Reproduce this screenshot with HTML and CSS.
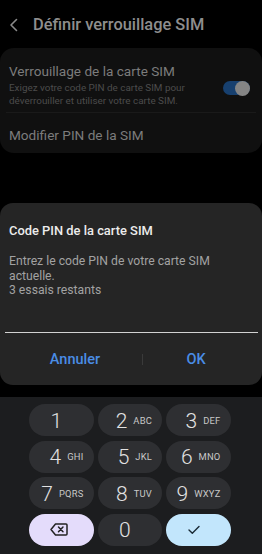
FILE: index.html
```html
<!DOCTYPE html>
<html lang="fr">
<head>
<meta charset="utf-8">
<link rel="stylesheet" href="styles.css">
</head>
<body>
<div class="screen">
  <div class="header">
    <svg class="back" width="10" height="14" viewBox="0 0 10 14"><path d="M7.5 1.5 L2 7 L7.5 12.5" fill="none" stroke="#8a8a8a" stroke-width="1.6" stroke-linecap="round" stroke-linejoin="round"/></svg>
    <span class="title">Définir verrouillage SIM</span>
  </div>
  <div class="card">
    <div class="item item-toggle">
      <div class="item-text">
        <div class="item-title">Verrouillage de la carte SIM</div>
        <div class="item-sub">Exigez votre code PIN de carte SIM pour déverrouiller et utiliser votre carte SIM.</div>
      </div>
      <div class="toggle"><div class="knob"></div></div>
    </div>
    <div class="divider"></div>
    <div class="item item-plain">
      <div class="item-title">Modifier PIN de la SIM</div>
    </div>
  </div>
  <div class="dialog">
    <div class="dlg-title">Code PIN de la carte SIM</div>
    <div class="dlg-body">Entrez le code PIN de votre carte SIM actuelle.<br>3 essais restants</div>
    <div class="dlg-input"></div>
    <div class="dlg-buttons">
      <div class="btn btn-cancel">Annuler</div>
      <div class="btn-sep"></div>
      <div class="btn btn-ok">OK</div>
    </div>
  </div>
  <div class="keypad">
    <div class="key"><span class="d">1</span></div>
    <div class="key"><span class="d">2</span><span class="l">ABC</span></div>
    <div class="key"><span class="d">3</span><span class="l">DEF</span></div>
    <div class="key"><span class="d">4</span><span class="l">GHI</span></div>
    <div class="key"><span class="d">5</span><span class="l">JKL</span></div>
    <div class="key"><span class="d">6</span><span class="l">MNO</span></div>
    <div class="key"><span class="d">7</span><span class="l">PQRS</span></div>
    <div class="key"><span class="d">8</span><span class="l">TUV</span></div>
    <div class="key"><span class="d">9</span><span class="l">WXYZ</span></div>
    <div class="key key-del">
      <svg width="18" height="13" viewBox="0 0 18 13"><path d="M5.5 1 H16 a1 1 0 0 1 1 1 V11 a1 1 0 0 1 -1 1 H5.5 L1 6.5 Z" fill="none" stroke="#222" stroke-width="1.5" stroke-linejoin="round"/><path d="M8.5 4 L13 8.8 M13 4 L8.5 8.8" stroke="#222" stroke-width="1.5" stroke-linecap="round"/></svg>
    </div>
    <div class="key"><span class="d">0</span></div>
    <div class="key key-ok">
      <svg width="12" height="10" viewBox="0 0 12 10"><path d="M1 5 L4.3 8.2 L11 1.5" fill="none" stroke="#1a2a35" stroke-width="1.4" stroke-linecap="round" stroke-linejoin="round"/></svg>
    </div>
  </div>
</div>
</body>
</html>
```
FILE: styles.css
```css
html, body {
  margin: 0;
  padding: 0;
  background: #000;
}
body {
  width: 262px;
  height: 554px;
  overflow: hidden;
  font-family: Roboto, "Noto Sans", sans-serif;
}
.screen {
  display: flex;
  flex-direction: column;
  height: 554px;
}
.header {
  height: 48px;
  display: flex;
  align-items: center;
  padding-left: 9px;
  box-sizing: border-box;
}
.back {
  margin-right: 14px;
  margin-top: 1px;
}
.title {
  font-size: 16.4px;
  font-weight: 500;
  color: #8e8e8e;
}
.card {
  background: #101010;
  border-radius: 14px;
  height: 105px;
  box-sizing: border-box;
}
.item-toggle {
  display: flex;
  align-items: flex-start;
  padding: 15px 12px 0 9px;
  height: 64px;
  box-sizing: border-box;
}
.item-text {
  flex: 1;
}
.item-title {
  font-size: 13.6px;
  color: #7c7c7c;
  line-height: 17px;
}
.item-sub {
  font-size: 9.9px;
  color: #4c4c4c;
  line-height: 13px;
  margin-top: 1px;
  width: 210px;
}
.toggle {
  width: 27px;
  height: 14px;
  border-radius: 7px;
  background: #17406f;
  margin-top: 18px;
  position: relative;
  flex-shrink: 0;
}
.knob {
  position: absolute;
  right: 0;
  top: -0.5px;
  width: 15px;
  height: 15px;
  border-radius: 50%;
  background: #858585;
}
.divider {
  height: 1px;
  background: #1a1a1a;
  margin: 0 6px;
}
.item-plain {
  padding: 14px 9px 0 9px;
}
.dialog {
  margin-top: 50px;
  background: #252525;
  border-radius: 13px;
  height: 182px;
  box-sizing: border-box;
  padding-top: 19px;
}
.dlg-title {
  padding-left: 9px;
  font-size: 12.9px;
  font-weight: 500;
  color: #ececec;
  line-height: 17px;
}
.dlg-body {
  padding-left: 9px;
  margin-top: 15px;
  width: 215px;
  font-size: 12.2px;
  color: #a2a2a2;
  line-height: 14.6px;
}
.dlg-input {
  margin: 34px 4px 0 5px;
  height: 1.6px;
  background: #d2d2d2;
}
.dlg-buttons {
  display: flex;
  align-items: center;
  height: 52px;
  padding-left: 8px;
}
.btn {
  text-align: center;
  font-size: 14.5px;
  font-weight: 500;
  color: #4a8de6;
}
.btn-cancel {
  width: 134px;
}
.btn-ok {
  width: 106px;
}
.btn-sep {
  width: 1px;
  height: 11px;
  background: #3a3a3a;
}
.keypad {
  margin-top: 12px;
  flex: 1;
  background: #1c1d1f;
  display: grid;
  grid-template-columns: repeat(3, 64.5px);
  grid-auto-rows: 32px;
  column-gap: 4px;
  row-gap: 4.6px;
  padding: 7px 0 0 29px;
}
.key {
  background: #2e2f32;
  border-radius: 16px;
  display: grid;
  grid-template-columns: 1fr auto 1fr;
  align-items: center;
  padding-right: 10px;
  color: #e2e2e2;
}
.d {
  grid-column: 2;
  font-size: 21px;
  font-weight: 300;
  line-height: 1;
  margin-top: 2px;
}
.l {
  grid-column: 3;
  justify-self: start;
  font-size: 9.4px;
  margin-left: 6px;
  color: #c8c8c8;
  letter-spacing: 0.2px;
  white-space: nowrap;
}
.key-del, .key-ok {
  display: flex;
  justify-content: center;
  padding-right: 0;
}
.key-del {
  background: #e4dcfb;
  padding-right: 4px;
}
.key-ok {
  background: #c2e6fc;
  padding-right: 8px;
}
```
